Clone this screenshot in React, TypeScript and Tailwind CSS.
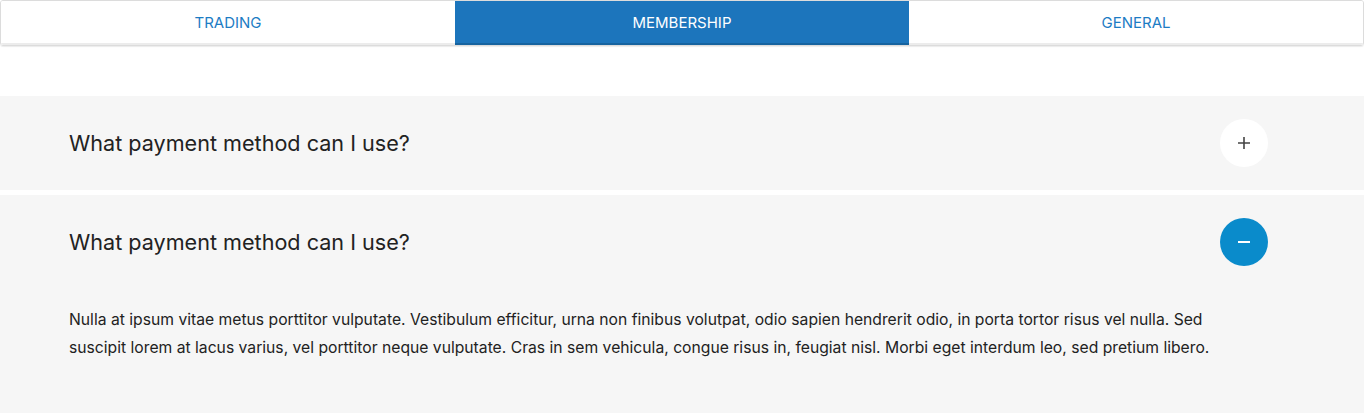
import React, { useState } from "react";

const tabs = ["TRADING", "MEMBERSHIP", "GENERAL"];

const faqs = [
  { q: "What payment method can I use?", a: "" },
  {
    q: "What payment method can I use?",
    a: "Nulla at ipsum vitae metus porttitor vulputate. Vestibulum efficitur, urna non finibus volutpat, odio sapien hendrerit odio, in porta tortor risus vel nulla. Sed suscipit lorem at lacus varius, vel porttitor neque vulputate. Cras in sem vehicula, congue risus in, feugiat nisl. Morbi eget interdum leo, sed pretium libero.",
  },
];

export default function App() {
  const [active, setActive] = useState(1);
  const [open, setOpen] = useState(1);

  return (
    <div className="w-[1364px] h-[413px] bg-white overflow-hidden" style={{ fontFamily: "Inter, 'Noto Sans', sans-serif" }}>
      <div className="flex h-[46px] border border-[#dcdcdc] rounded-[3px] shadow-[0_1px_1px_rgba(0,0,0,0.08)] overflow-hidden">
        {tabs.map((t, i) => (
          <button
            key={t}
            onClick={() => setActive(i)}
            className={
              i === active
                ? "flex-1 flex items-center justify-center pt-[2px] text-[15px] text-white bg-[#1c75bc] border-b-2 border-[#16639f]"
                : "flex-1 flex items-center justify-center pt-[2px] text-[15px] text-[#1c7cc4] bg-white border-b-2 border-[#ececec]"
            }
          >
            {t}
          </button>
        ))}
      </div>

      <div className="mt-[50px] flex flex-col gap-[5px]">
        {faqs.map((f, i) => (
          <div key={i} className="bg-[#f6f6f6]">
            <div className="flex items-center justify-between pl-[69px] pr-[96px] py-[23px]">
              <span className="text-[21.6px] text-[#222]">{f.q}</span>
              <button
                onClick={() => setOpen(open === i ? -1 : i)}
                className={
                  open === i
                    ? "w-12 h-12 rounded-full bg-[#0a8bcb] flex items-center justify-center"
                    : "w-12 h-12 rounded-full bg-white flex items-center justify-center"
                }
              >
                {open === i ? (
                  <svg width="14" height="14" viewBox="0 0 14 14">
                    <path d="M1 7h12" stroke="#fff" strokeWidth="2" />
                  </svg>
                ) : (
                  <svg width="14" height="14" viewBox="0 0 14 14">
                    <path d="M1 7h12M7 1v12" stroke="#444" strokeWidth="1.6" />
                  </svg>
                )}
              </button>
            </div>
            {open === i && f.a && (
              <p className="pl-[69px] pr-[130px] pt-[17px] pb-[52px] text-[15.7px] leading-[28px] text-[#222]">{f.a}</p>
            )}
          </div>
        ))}
      </div>
    </div>
  );
}
